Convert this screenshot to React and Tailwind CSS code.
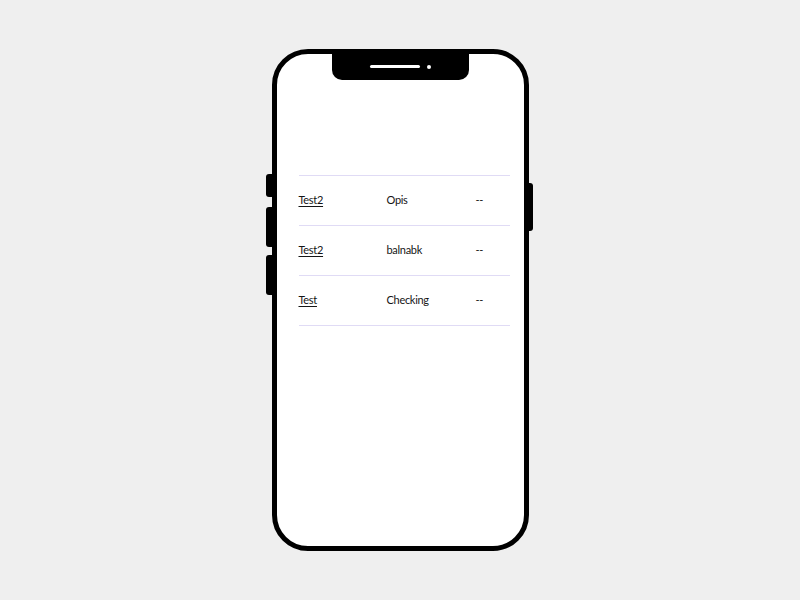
export default function App() {
  const rows = [
    ["Test2", "Opis", "--"],
    ["Test2", "balnabk", "--"],
    ["Test", "Checking", "--"],
  ];
  return (
    <div className="w-[800px] h-[600px] bg-[#efefef] flex items-center justify-center" style={{ fontFamily: 'Lato, "Noto Sans", sans-serif' }}>
      <div className="relative w-[257px] h-[502px]">
        <div className="absolute left-[-6px] top-[125px] w-[7px] h-[23px] bg-black rounded-l-[3px]" />
        <div className="absolute left-[-6px] top-[158px] w-[7px] h-[40px] bg-black rounded-l-[3px]" />
        <div className="absolute left-[-6px] top-[206px] w-[7px] h-[40px] bg-black rounded-l-[3px]" />
        <div className="absolute right-[-4px] top-[134px] w-[6px] h-[48px] bg-black rounded-r-[3px]" />
        <div className="relative w-full h-full bg-white border-[5px] border-black rounded-[36px] overflow-hidden">
          <div className="absolute left-[55px] top-[-1px] w-[137px] h-[27px] bg-black rounded-b-[10px] flex items-center justify-center gap-[7px]">
            <div className="w-[50px] h-[3px] bg-white rounded-full" />
            <div className="w-[4px] h-[4px] bg-white rounded-full" />
          </div>
          <div className="pt-[121px] pl-[22px] pr-[14px]">
            <div className="border-t border-[#e0dbf5]">
              {rows.map((r, i) => (
                <div key={i} className="flex items-center h-[50px] border-b border-[#e0dbf5] text-[11px] tracking-[-0.3px] text-[#151515]">
                  <div className="w-[88px] underline underline-offset-2">{r[0]}</div>
                  <div className="w-[89px]">{r[1]}</div>
                  <div className="flex-1">{r[2]}</div>
                </div>
              ))}
            </div>
          </div>
        </div>
      </div>
    </div>
  );
}
